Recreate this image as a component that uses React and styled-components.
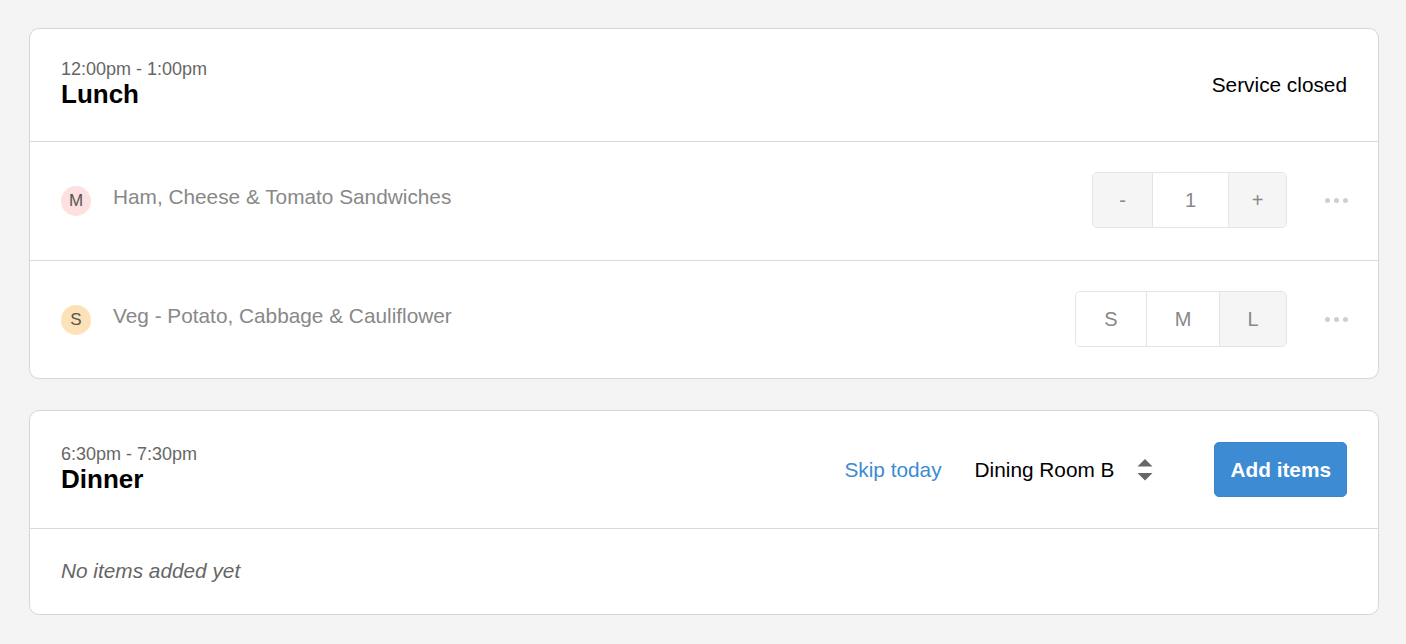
import React from "react";
import styled, { createGlobalStyle } from "styled-components";

const Global = createGlobalStyle`
  html, body { margin: 0; padding: 0; background: #f4f4f4; }
  body { font-family: "Liberation Sans", Arial, sans-serif; }
  * { box-sizing: border-box; }
`;

const Page = styled.div`
  padding: 28px 27px 28px 29px;
  display: flex;
  flex-direction: column;
  gap: 31px;
`;

const Card = styled.section`
  background: #fff;
  border: 1px solid #d6d6d6;
  border-radius: 10px;
  overflow: hidden;
`;

const Header = styled.div`
  display: flex;
  align-items: center;
  justify-content: space-between;
  padding: 31px 31px;
  min-height: ${(p) => (p.$tall ? "118px" : "113px")};
  border-bottom: 1px solid #d9d9d9;
`;

const TitleBlock = styled.div`
  display: flex;
  flex-direction: column;
`;

const Time = styled.div`
  font-size: 18px;
  line-height: 19px;
  color: #666;
`;

const Title = styled.h2`
  margin: 0;
  font-size: 26px;
  line-height: 31px;
  font-weight: 700;
  color: #000;
`;

const Status = styled.div`
  font-size: 20.8px;
  color: #000;
`;

const Row = styled.div`
  display: flex;
  align-items: flex-start;
  justify-content: space-between;
  min-height: 118px;
  padding: 30px 30px 31px 31px;
  & + & { border-top: 1px solid #d9d9d9; }
`;

const ItemInfo = styled.div`
  display: flex;
  align-items: flex-start;
  gap: 22px;
  padding-top: 13px;
`;

const Badge = styled.span`
  width: 30px;
  height: 30px;
  margin-top: 1px;
  border-radius: 50%;
  background: ${(p) => p.$bg};
  color: #555;
  font-size: 17px;
  display: flex;
  align-items: center;
  justify-content: center;
  flex: none;
`;

const ItemName = styled.span`
  font-size: 20.8px;
  line-height: 24px;
  color: #888;
`;

const Controls = styled.div`
  display: flex;
  align-items: center;
  gap: 38px;
`;

const Segmented = styled.div`
  display: flex;
  height: 56px;
  border: 1px solid #e4e4e4;
  border-radius: 5px;
  overflow: hidden;
`;

const Seg = styled.button`
  width: ${(p) => p.$w}px;
  height: 100%;
  border: none;
  border-left: 1px solid #e4e4e4;
  &:first-child { border-left: none; }
  background: ${(p) => (p.$shade ? "#f5f5f5" : "#fff")};
  color: #888;
  font-family: inherit;
  font-size: 20px;
  padding: 0;
  display: flex;
  align-items: center;
  justify-content: center;
`;

const More = styled.div`
  display: flex;
  gap: 4px;
  span {
    width: 5px;
    height: 5px;
    border-radius: 50%;
    background: #cfcfcf;
  }
`;

const Actions = styled.div`
  display: flex;
  align-items: center;
`;

const SkipLink = styled.a`
  font-size: 20.8px;
  color: #3d8bd3;
  text-decoration: none;
  margin-right: 33px;
`;

const Select = styled.div`
  display: flex;
  align-items: center;
  gap: 22px;
  font-size: 20.8px;
  color: #000;
  margin-right: 60px;
`;

const Button = styled.button`
  height: 55px;
  padding: 0 15px;
  border: 1px solid #3a86cc;
  border-radius: 5px;
  background: #3d8bd3;
  color: #fff;
  font-family: inherit;
  font-size: 20.8px;
  font-weight: 700;
`;

const Empty = styled.div`
  padding: 30px 31px 31px;
  font-size: 20.8px;
  line-height: 24px;
  font-style: italic;
  color: #666;
`;

const Arrows = () => (
  <svg width="18" height="24" viewBox="0 0 18 24">
    <polygon points="1.5,8.5 9,1 16.5,8.5" fill="#666" />
    <polygon points="1.5,15 16.5,15 9,22.5" fill="#666" />
  </svg>
);

const Dots = () => (
  <More>
    <span />
    <span />
    <span />
  </More>
);

export default function App() {
  return (
    <>
      <Global />
      <Page>
        <Card>
          <Header>
            <TitleBlock>
              <Time>12:00pm - 1:00pm</Time>
              <Title>Lunch</Title>
            </TitleBlock>
            <Status>Service closed</Status>
          </Header>
          <Row>
            <ItemInfo>
              <Badge $bg="#fde0df">M</Badge>
              <ItemName>Ham, Cheese &amp; Tomato Sandwiches</ItemName>
            </ItemInfo>
            <Controls>
              <Segmented>
                <Seg $w={59} $shade>-</Seg>
                <Seg $w={76}>1</Seg>
                <Seg $w={58} $shade>+</Seg>
              </Segmented>
              <Dots />
            </Controls>
          </Row>
          <Row>
            <ItemInfo>
              <Badge $bg="#fde2b7">S</Badge>
              <ItemName>Veg - Potato, Cabbage &amp; Cauliflower</ItemName>
            </ItemInfo>
            <Controls>
              <Segmented>
                <Seg $w={70}>S</Seg>
                <Seg $w={73}>M</Seg>
                <Seg $w={67} $shade>L</Seg>
              </Segmented>
              <Dots />
            </Controls>
          </Row>
        </Card>
        <Card>
          <Header $tall>
            <TitleBlock>
              <Time>6:30pm - 7:30pm</Time>
              <Title>Dinner</Title>
            </TitleBlock>
            <Actions>
              <SkipLink href="#">Skip today</SkipLink>
              <Select>
                <span>Dining Room B</span>
                <Arrows />
              </Select>
              <Button>Add items</Button>
            </Actions>
          </Header>
          <Empty>No items added yet</Empty>
        </Card>
      </Page>
    </>
  );
}
